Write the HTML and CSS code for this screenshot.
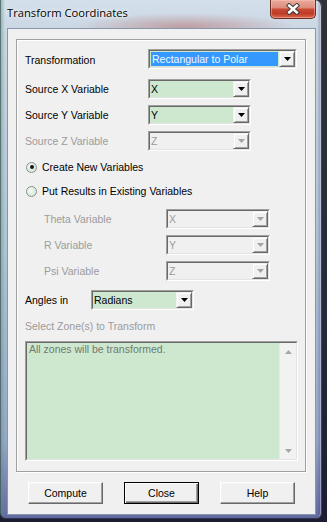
FILE: index.html
```html
<!DOCTYPE html>
<html>
<head>
<meta charset="utf-8">
<link rel="stylesheet" href="styles.css">
</head>
<body>
<div class="window">
  <div class="titlebar">
    <span class="title">Transform Coordinates</span>
    <div class="closebtn">
      <svg width="14" height="12" viewBox="0 0 14 12">
        <path d="M3.2 2.6 L10.8 9.4 M10.8 2.6 L3.2 9.4" stroke="#3b3b3b" stroke-width="4.6" stroke-linecap="square" fill="none"/>
        <path d="M3.2 2.6 L10.8 9.4 M10.8 2.6 L3.2 9.4" stroke="#ffffff" stroke-width="2.6" stroke-linecap="square" fill="none"/>
      </svg>
    </div>
  </div>
  <div class="client">
    <div class="group">
      <div class="row">
        <span class="lbl lbl-main lbl-low">Transformation</span>
        <div class="combo w149">
          <div class="combo-in">
            <span class="value"><span class="sel">Rectangular to Polar</span></span>
            <span class="dd"><svg width="7" height="4" viewBox="0 0 7 4"><polygon points="0,0 7,0 3.5,4" fill="#000"/></svg></span>
          </div>
        </div>
      </div>
      <div class="row mt4">
        <span class="lbl lbl-main">Source X Variable</span>
        <div class="combo w103">
          <div class="combo-in">
            <span class="value pad">X</span>
            <span class="dd"><svg width="7" height="4" viewBox="0 0 7 4"><polygon points="0,0 7,0 3.5,4" fill="#000"/></svg></span>
          </div>
        </div>
      </div>
      <div class="row">
        <span class="lbl lbl-main">Source Y Variable</span>
        <div class="combo w103">
          <div class="combo-in">
            <span class="value pad">Y</span>
            <span class="dd"><svg width="7" height="4" viewBox="0 0 7 4"><polygon points="0,0 7,0 3.5,4" fill="#000"/></svg></span>
          </div>
        </div>
      </div>
      <div class="row">
        <span class="lbl lbl-main disabled">Source Z Variable</span>
        <div class="combo w103 off">
          <div class="combo-in">
            <span class="value pad">Z</span>
            <span class="dd"><svg width="7" height="4" viewBox="0 0 7 4"><polygon points="0,0 7,0 3.5,4" fill="#a3a3a3"/></svg></span>
          </div>
        </div>
      </div>
      <div class="radio-row mt2">
        <span class="radio on"></span>
        <span>Create New Variables</span>
      </div>
      <div class="radio-row mt2">
        <span class="radio"></span>
        <span>Put Results in Existing Variables</span>
      </div>
      <div class="row indent mt4">
        <span class="lbl lbl-sub disabled">Theta Variable</span>
        <div class="combo w104 off">
          <div class="combo-in">
            <span class="value pad">X</span>
            <span class="dd"><svg width="7" height="4" viewBox="0 0 7 4"><polygon points="0,0 7,0 3.5,4" fill="#a3a3a3"/></svg></span>
          </div>
        </div>
      </div>
      <div class="row indent">
        <span class="lbl lbl-sub disabled">R Variable</span>
        <div class="combo w104 off">
          <div class="combo-in">
            <span class="value pad">Y</span>
            <span class="dd"><svg width="7" height="4" viewBox="0 0 7 4"><polygon points="0,0 7,0 3.5,4" fill="#a3a3a3"/></svg></span>
          </div>
        </div>
      </div>
      <div class="row indent">
        <span class="lbl lbl-sub disabled">Psi Variable</span>
        <div class="combo w104 off">
          <div class="combo-in">
            <span class="value pad">Z</span>
            <span class="dd"><svg width="7" height="4" viewBox="0 0 7 4"><polygon points="0,0 7,0 3.5,4" fill="#a3a3a3"/></svg></span>
          </div>
        </div>
      </div>
      <div class="row mt3">
        <span class="lbl lbl-angle">Angles in</span>
        <div class="combo w103">
          <div class="combo-in">
            <span class="value pad">Radians</span>
            <span class="dd"><svg width="7" height="4" viewBox="0 0 7 4"><polygon points="0,0 7,0 3.5,4" fill="#000"/></svg></span>
          </div>
        </div>
      </div>
      <div class="caption mt3 disabled">Select Zone(s) to Transform</div>
      <div class="list mt2">
        <div class="list-in">
          <div class="list-body">All zones will be transformed.</div>
          <div class="scroll">
            <span class="sarrow"><svg width="7" height="4" viewBox="0 0 7 4"><polygon points="0,4 7,4 3.5,0" fill="#a6a6a6"/></svg></span>
            <span class="sarrow"><svg width="7" height="4" viewBox="0 0 7 4"><polygon points="0,0 7,0 3.5,4" fill="#a6a6a6"/></svg></span>
          </div>
        </div>
      </div>
    </div>
    <div class="buttons">
      <button class="btn">Compute</button>
      <button class="btn default">Close</button>
      <button class="btn">Help</button>
    </div>
  </div>
</div>
</body>
</html>
```

FILE: styles.css
```css
* { box-sizing: border-box; }

body {
  margin: 0;
  width: 327px;
  height: 522px;
  overflow: hidden;
  background: linear-gradient(180deg, #2e3236 0%, #262a3a 60%, #1c1d33 100%);
  font-family: "Liberation Sans", Arial, sans-serif;
  font-size: 10.5px;
  color: #000;
}

.window {
  width: 322px;
  height: 519px;
  border-radius: 0 7px 6px 6px;
  padding: 0 6px 4px 7px;
  display: flex;
  flex-direction: column;
  background:
    radial-gradient(ellipse 110px 14px at 185px 27px, rgba(178, 98, 96, 0.5), rgba(178, 98, 96, 0)),
    linear-gradient(to right, rgba(80, 150, 110, 0.55) 0px, rgba(80, 150, 110, 0) 5px),
    linear-gradient(to left, rgba(50, 60, 120, 0.45) 0px, rgba(50, 60, 120, 0) 5px),
    linear-gradient(180deg, #d3dfea 0px, #c8d5e2 40px, #b2c4d6 240px, #97a6c8 440px, #626aa0 100%);
  box-shadow: inset -1px 0 0 #3a4356, inset 0 -1px 0 #2f3550, inset 1px 0 0 rgba(60, 70, 90, 0.6), inset -2px 0 0 rgba(255, 255, 255, 0.35);
}

.titlebar {
  height: 28px;
  display: flex;
  justify-content: space-between;
  align-items: flex-start;
}

.title {
  font-family: "Open Sans", "Noto Sans", sans-serif;
  font-size: 11.2px;
  line-height: 16px;
  margin-top: 5px;
  color: #000;
  text-shadow: 0 0 6px rgba(255, 255, 255, 0.9), 0 0 2px rgba(255, 255, 255, 0.8);
}

.closebtn {
  width: 46px;
  height: 19px;
  border: 1px solid #6e2c22;
  border-top: none;
  border-radius: 0 0 5px 5px;
  background: linear-gradient(180deg, #e9ab9e 0%, #dd8d7c 42%, #c84a34 52%, #c03b25 75%, #d86a50 100%);
  box-shadow: inset 0 0 0 1px rgba(255, 200, 190, 0.45);
  display: flex;
  align-items: center;
  justify-content: center;
}

.client {
  flex: 1;
  background: #f0f0f0;
  border: 1px solid #8796ab;
  padding: 10px 0 0 8px;
  display: flex;
  flex-direction: column;
}

.group {
  width: 290px;
  height: 433px;
  border: 1px solid #a0a0a0;
  box-shadow: inset 1px 1px 0 #fff, 1px 1px 0 #fff;
  padding: 9px 0 0 8px;
  display: flex;
  flex-direction: column;
  gap: 6px;
}

.mt2 { margin-top: 2px; }
.mt3 { margin-top: 3px; }
.mt4 { margin-top: 4px; }

.row {
  display: flex;
  align-items: center;
  height: 20px;
}

.row.indent { padding-left: 19px; }

.lbl { line-height: 13px; white-space: nowrap; }
.lbl-main { width: 123px; }
.lbl-sub { width: 122px; }
.lbl-angle { width: 66px; }
.lbl-low { padding-top: 2px; }

.disabled { color: #9b9b9b; }

.combo {
  height: 20px;
  border: 1px solid;
  border-color: #a0a0a0 #fff #fff #a0a0a0;
  display: flex;
}

.w149 { width: 149px; }
.w103 { width: 103px; }
.w104 { width: 104px; }

.combo-in {
  flex: 1;
  display: flex;
  border: 1px solid;
  border-color: #696969 #e3e3e3 #e3e3e3 #696969;
  background: #cee8d0;
}

.combo.off .combo-in { background: #f0f0f0; }
.combo.off .value { color: #9b9b9b; }

.value {
  flex: 1;
  display: flex;
  align-items: stretch;
  padding: 1px 1px 1px 0;
  line-height: 14px;
  white-space: nowrap;
  overflow: hidden;
}

.value.pad { padding-left: 1px; }

.sel {
  flex: 1;
  margin-left: 1px;
  background: #3399ff;
  color: #f2f8ff;
  padding-left: 1px;
}

.dd {
  width: 16px;
  height: 16px;
  background: #f0f0f0;
  border: 1px solid;
  border-color: #f0f0f0 #696969 #696969 #f0f0f0;
  box-shadow: inset 1px 1px 0 #fff, inset -1px -1px 0 #a0a0a0;
  display: flex;
  align-items: center;
  justify-content: center;
}

.dd svg { display: block; }

.radio-row {
  display: flex;
  align-items: center;
  gap: 5px;
  height: 16px;
  padding-left: 1px;
  line-height: 13px;
}

.radio {
  width: 11px;
  height: 11px;
  border-radius: 50%;
  border: 1px solid #8c918c;
  background: radial-gradient(circle at 40% 40%, #f6fbf6 0%, #dcebdc 60%, #c9dfca 100%);
  display: flex;
  align-items: center;
  justify-content: center;
}

.radio.on::after {
  content: "";
  width: 4px;
  height: 4px;
  border-radius: 50%;
  background: #151515;
}

.caption {
  height: 14px;
  line-height: 14px;
}

.list {
  width: 273px;
  height: 120px;
  border: 1px solid;
  border-color: #a0a0a0 #fff #fff #a0a0a0;
  display: flex;
}

.list-in {
  flex: 1;
  display: flex;
  border: 1px solid;
  border-color: #696969 #e3e3e3 #e3e3e3 #696969;
  background: #cee8d0;
}

.list-body {
  flex: 1;
  padding: 0 2px;
  line-height: 13px;
  color: #6f7a70;
}

.scroll {
  width: 17px;
  background: #f2f2f2;
  border-left: 1px solid #e8e8e8;
  display: flex;
  flex-direction: column;
  justify-content: space-between;
}

.sarrow {
  height: 17px;
  display: flex;
  align-items: center;
  justify-content: center;
}

.sarrow svg { display: block; }

.buttons {
  margin-top: 10px;
  margin-left: 12px;
  display: flex;
  gap: 21px;
}

.btn {
  width: 75px;
  height: 22px;
  padding: 0;
  margin: 0;
  font: inherit;
  color: #000;
  background: #f0f0f0;
  border: 1px solid;
  border-color: #fff #696969 #696969 #fff;
  box-shadow: inset -1px -1px 0 #a0a0a0, inset 1px 1px 0 #f4f4f4;
  display: flex;
  align-items: center;
  justify-content: center;
}

.btn.default {
  border: 1px solid #000;
  box-shadow: inset 1px 1px 0 #fff, inset -1px -1px 0 #696969, inset -2px -2px 0 #a0a0a0;
}
```
